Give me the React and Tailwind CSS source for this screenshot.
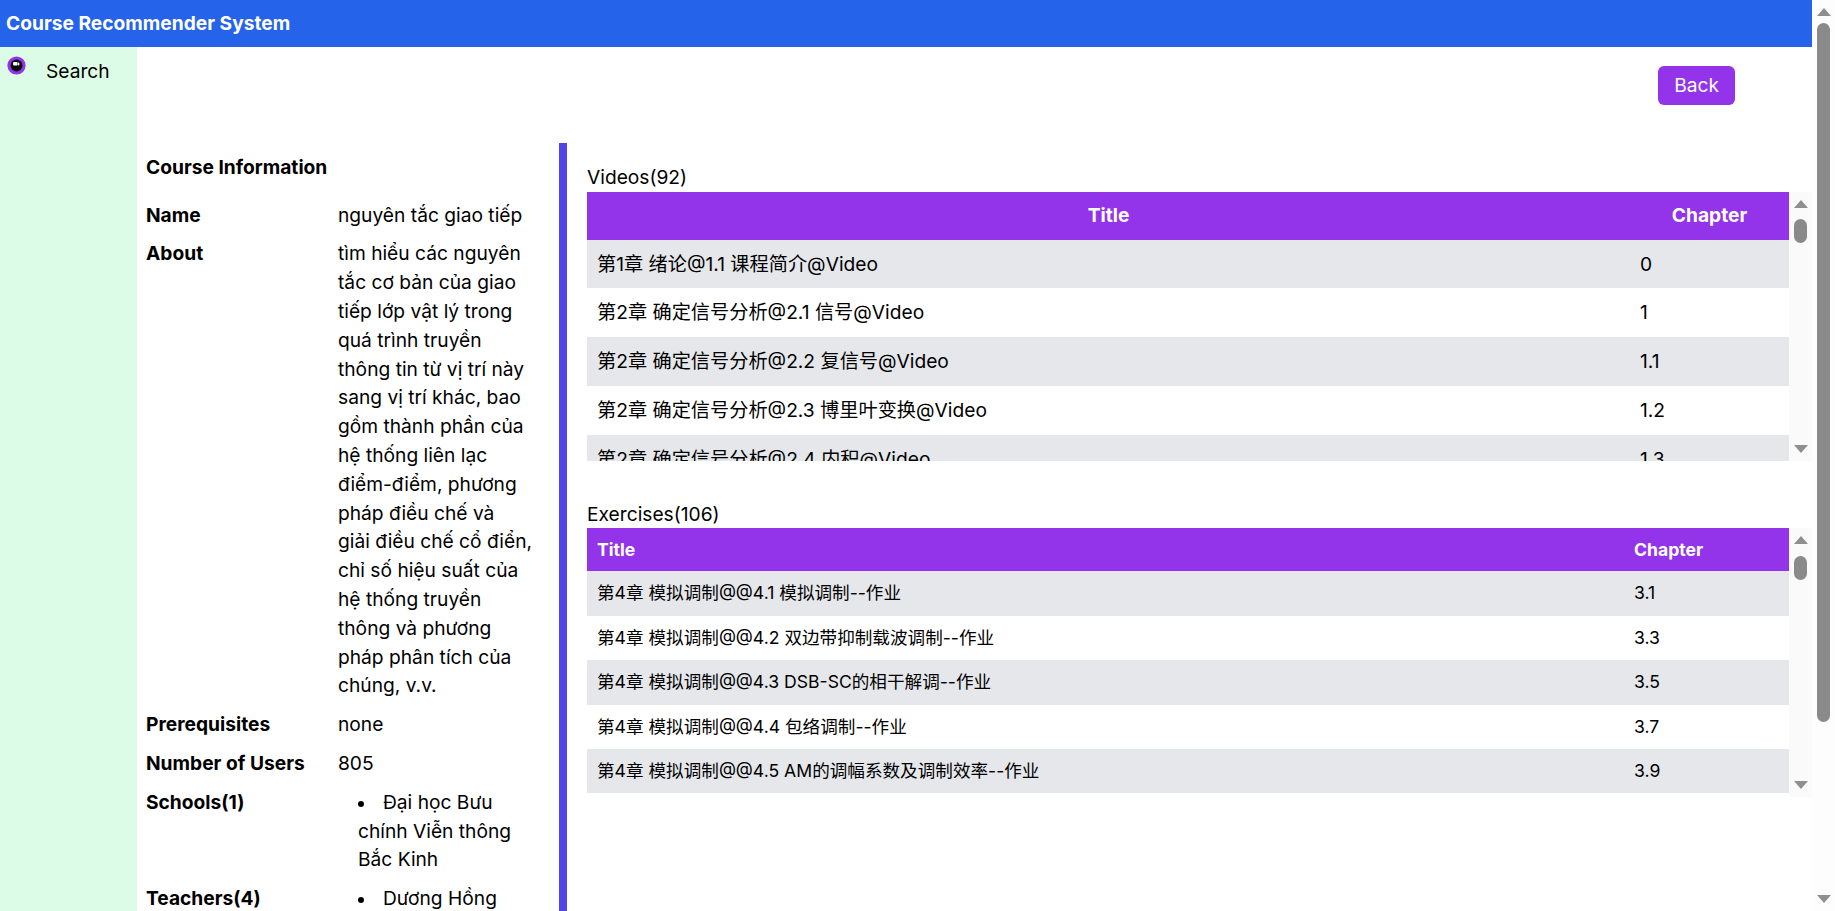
import React from 'react'

const videos = [
    ['第1章 绪论@1.1 课程简介@Video', '0'],
    ['第2章 确定信号分析@2.1 信号@Video', '1'],
    ['第2章 确定信号分析@2.2 复信号@Video', '1.1'],
    ['第2章 确定信号分析@2.3 博里叶变换@Video', '1.2'],
    ['第2章 确定信号分析@2.4 内积@Video', '1.3'],
    ['第2章 确定信号分析@2.5 能量谱密度与功率谱密度@Video', '1.4'],
    ['第2章 确定信号分析@2.6 相关函数@Video', '1.5'],
    ['第2章 确定信号分析@2.7 希尔伯特变换@Video', '1.6'],
    ['第2章 确定信号分析@2.8 带通信号@Video', '1.7'],
    ['第3章 随机过程@3.1 随机变量@Video', '2'],
    ['第3章 随机过程@3.2 随机过程的基本概念@Video', '2.1'],
    ['第3章 随机过程@3.3 平稳过程@Video', '2.2'],
    ['第3章 随机过程@3.4 功率谱密度@Video', '2.3'],
    ['第3章 随机过程@3.5 高斯过程@Video', '2.4'],
    ['第3章 随机过程@3.6 白噪声@Video', '2.5'],
    ['第3章 随机过程@3.7 窄带过程@Video', '2.6'],
    ['第4章 模拟调制@4.1 模拟调制@Video', '3'],
    ['第4章 模拟调制@4.2 双边带抑制载波调制@Video', '3.1'],
    ['第4章 模拟调制@4.3 DSB-SC的相干解调@Video', '3.2'],
    ['第4章 模拟调制@4.4 包络调制@Video', '3.3'],
    ['第4章 模拟调制@4.5 AM的调幅系数及调制效率@Video', '3.4'],
    ['第4章 模拟调制@4.6 单边带调制@Video', '3.5'],
    ['第4章 模拟调制@4.7 频率调制@Video', '3.6'],
    ['第4章 模拟调制@4.8 调频信号的带宽@Video', '3.7'],
]

const exercises = [
    ['第4章 模拟调制@@4.1 模拟调制--作业', '3.1'],
    ['第4章 模拟调制@@4.2 双边带抑制载波调制--作业', '3.3'],
    ['第4章 模拟调制@@4.3 DSB-SC的相干解调--作业', '3.5'],
    ['第4章 模拟调制@@4.4 包络调制--作业', '3.7'],
    ['第4章 模拟调制@@4.5 AM的调幅系数及调制效率--作业', '3.9'],
    ['第4章 模拟调制@@4.6 单边带调制--作业', '3.11'],
    ['第4章 模拟调制@@4.7 频率调制--作业', '3.13'],
    ['第4章 模拟调制@@4.8 调频信号的带宽--作业', '3.15'],
    ['第5章 数字基带传输@@5.1 数字基带信号--作业', '4.1'],
    ['第5章 数字基带传输@@5.2 码间干扰--作业', '4.3'],
    ['第5章 数字基带传输@@5.3 奈奎斯特准则--作业', '4.5'],
    ['第5章 数字基带传输@@5.4 眼图--作业', '4.7'],
    ['第5章 数字基带传输@@5.5 匹配滤波器--作业', '4.9'],
    ['第5章 数字基带传输@@5.6 最佳接收--作业', '4.11'],
    ['第6章 数字调制@@6.1 二进制数字调制--作业', '5.1'],
    ['第6章 数字调制@@6.2 多进制数字调制--作业', '5.3'],
    ['第6章 数字调制@@6.3 正交调制--作业', '5.5'],
    ['第6章 数字调制@@6.4 误码率分析--作业', '5.7'],
]

const about =
    'tìm hiểu các nguyên tắc cơ bản của giao tiếp lớp vật lý trong quá trình truyền thông tin từ vị trí này sang vị trí khác, bao gồm thành phần của hệ thống liên lạc điểm-điểm, phương pháp điều chế và giải\u00a0điều chế cổ điển, chỉ số hiệu suất của hệ thống truyền thông và phương pháp phân tích của chúng, v.v.'

const teachers = ['Dương Hồng Quang', 'Phạm Minh Khiêm', 'Lưu Khánh Thành', 'Vương Kiến Nghiệp']

const SearchIcon = () => (
    <svg width="19" height="19" viewBox="0 0 20 20" className="shrink-0">
        <circle cx="10" cy="10" r="9.6" fill="#9333ea" />
        <circle cx="10" cy="10" r="6.2" fill="#0a0a0a" />
        <rect x="6.4" y="6.4" width="4.8" height="3.6" rx="1" fill="#fff" />
        <rect x="11.6" y="6.9" width="1.4" height="3" rx="0.5" fill="#fff" />
    </svg>
)

// the browser's classic scrollbar (23px track, arrows, rounded thumb)
const ScrollTrack = ({ thumb, bg = 'bg-[#fafafa]' }) => (
    <div className={`w-[23px] shrink-0 flex flex-col items-center ${bg}`}>
        <svg width="14" height="8" viewBox="0 0 14 8" className="mt-2 shrink-0">
            <path d="M0 8L7 0L14 8Z" fill="#8f8f8f" />
        </svg>
        <div className="flex-1 min-h-0">
            <div className={`w-[13px] rounded-full bg-[#8a8a8a] ${thumb}`} />
        </div>
        <svg width="14" height="8" viewBox="0 0 14 8" className="mb-2 shrink-0">
            <path d="M0 0L7 8L14 0Z" fill="#8f8f8f" />
        </svg>
    </div>
)

const Bullet = () => (
    <span className="inline-block w-[6px] h-[6px] rounded-full bg-black align-middle mr-[19px]" />
)

const InfoRow = ({ label, children }) => (
    <div className="flex py-[5px]">
        <div className="w-[192px] shrink-0 font-bold">{label}</div>
        <div className="w-[196px]">{children}</div>
    </div>
)

const App = () => {
    return (
        <div className="h-screen flex bg-white font-['Inter','Noto_Sans_CJK_SC',sans-serif] text-black text-[19.2px] leading-[1.5]">
            <div className="flex-1 min-w-0 overflow-y-auto">
                <div className="min-h-full flex flex-col">
                    {/* Top bar */}
                    <header className="h-[47px] shrink-0 bg-[#2563eb] flex items-center px-1.5">
                        <h1 className="text-white font-bold">Course Recommender System</h1>
                    </header>

                    <div className="flex flex-1">
                        {/* Sidebar */}
                        <aside className="w-[137px] shrink-0 bg-[#dcfce7]">
                            <div className="flex items-start gap-5 pl-[7px] pt-[9px]">
                                <SearchIcon />
                                <span className="mt-px">Search</span>
                            </div>
                        </aside>

                        <main className="flex-1 min-w-0 pb-5">
                            <div className="flex justify-end pt-[19px] pr-[77px]">
                                <button className="bg-[#9333ea] text-white rounded-md px-4 py-[5px]">Back</button>
                            </div>

                            <div className="flex mt-[38px]">
                                {/* Course info */}
                                <section className="w-[422px] shrink-0 pl-[9px] pt-[10px]">
                                    <h2 className="font-bold mb-[14px]">Course Information</h2>
                                    <InfoRow label="Name">nguyên tắc giao tiếp</InfoRow>
                                    <InfoRow label="About">{about}</InfoRow>
                                    <InfoRow label="Prerequisites">none</InfoRow>
                                    <InfoRow label="Number of Users">805</InfoRow>
                                    <InfoRow label="Schools(1)">
                                        <ul className="pl-5">
                                            <li>
                                                <Bullet />
                                                Đại học Bưu chính Viễn thông Bắc Kinh
                                            </li>
                                        </ul>
                                    </InfoRow>
                                    <InfoRow label="Teachers(4)">
                                        <ul className="pl-5">
                                            {teachers.map((t) => (
                                                <li key={t}>
                                                    <Bullet />
                                                    {t}
                                                </li>
                                            ))}
                                        </ul>
                                    </InfoRow>
                                </section>

                                {/* Videos & exercises */}
                                <section className="flex-1 min-w-0 border-l-8 border-[#4f46e5] pl-5 pt-5">
                                    <div>Videos(92)</div>
                                    <div className="flex h-[269px]">
                                        <div className="flex-1 min-w-0 overflow-y-auto">
                                            <table className="w-full border-collapse">
                                                <thead>
                                                    <tr className="bg-[#9333ea] text-white">
                                                        <th className="px-2.5 py-[9.6px] font-bold text-center">Title</th>
                                                        <th className="w-[159px] px-2.5 py-[9.6px] font-bold text-center">Chapter</th>
                                                    </tr>
                                                </thead>
                                                <tbody>
                                                    {videos.map(([title, chapter], i) => (
                                                        <tr key={title} className={i % 2 === 0 ? 'bg-[#e5e7eb]' : 'bg-white'}>
                                                            <td className="px-2.5 py-2.5">{title}</td>
                                                            <td className="px-2.5 py-2.5">{chapter}</td>
                                                        </tr>
                                                    ))}
                                                </tbody>
                                            </table>
                                        </div>
                                        <ScrollTrack thumb="mt-[11px] h-[24px]" />
                                    </div>

                                    <div className="mt-[39px]">Exercises(106)</div>
                                    <div className="flex h-[269px] text-[17.6px]">
                                        <div className="flex-1 min-w-0 overflow-y-auto">
                                            <table className="w-full border-collapse">
                                                <thead>
                                                    <tr className="bg-[#9333ea] text-white">
                                                        <th className="px-2.5 py-[8.3px] font-bold text-left">Title</th>
                                                        <th className="w-[165px] px-2.5 py-[8.3px] font-bold text-left">Chapter</th>
                                                    </tr>
                                                </thead>
                                                <tbody>
                                                    {exercises.map(([title, chapter], i) => (
                                                        <tr key={title} className={i % 2 === 0 ? 'bg-[#e5e7eb]' : 'bg-white'}>
                                                            <td className="px-2.5 py-[9px]">{title}</td>
                                                            <td className="px-2.5 py-[9px]">{chapter}</td>
                                                        </tr>
                                                    ))}
                                                </tbody>
                                            </table>
                                        </div>
                                        <ScrollTrack thumb="mt-[12px] h-[24px]" />
                                    </div>
                                </section>
                            </div>
                        </main>
                    </div>
                </div>
            </div>

            {/* page scrollbar */}
            <ScrollTrack thumb="mt-[7px] h-[699px]" bg="bg-[#fdfdfd]" />
        </div>
    )
}

export default App
